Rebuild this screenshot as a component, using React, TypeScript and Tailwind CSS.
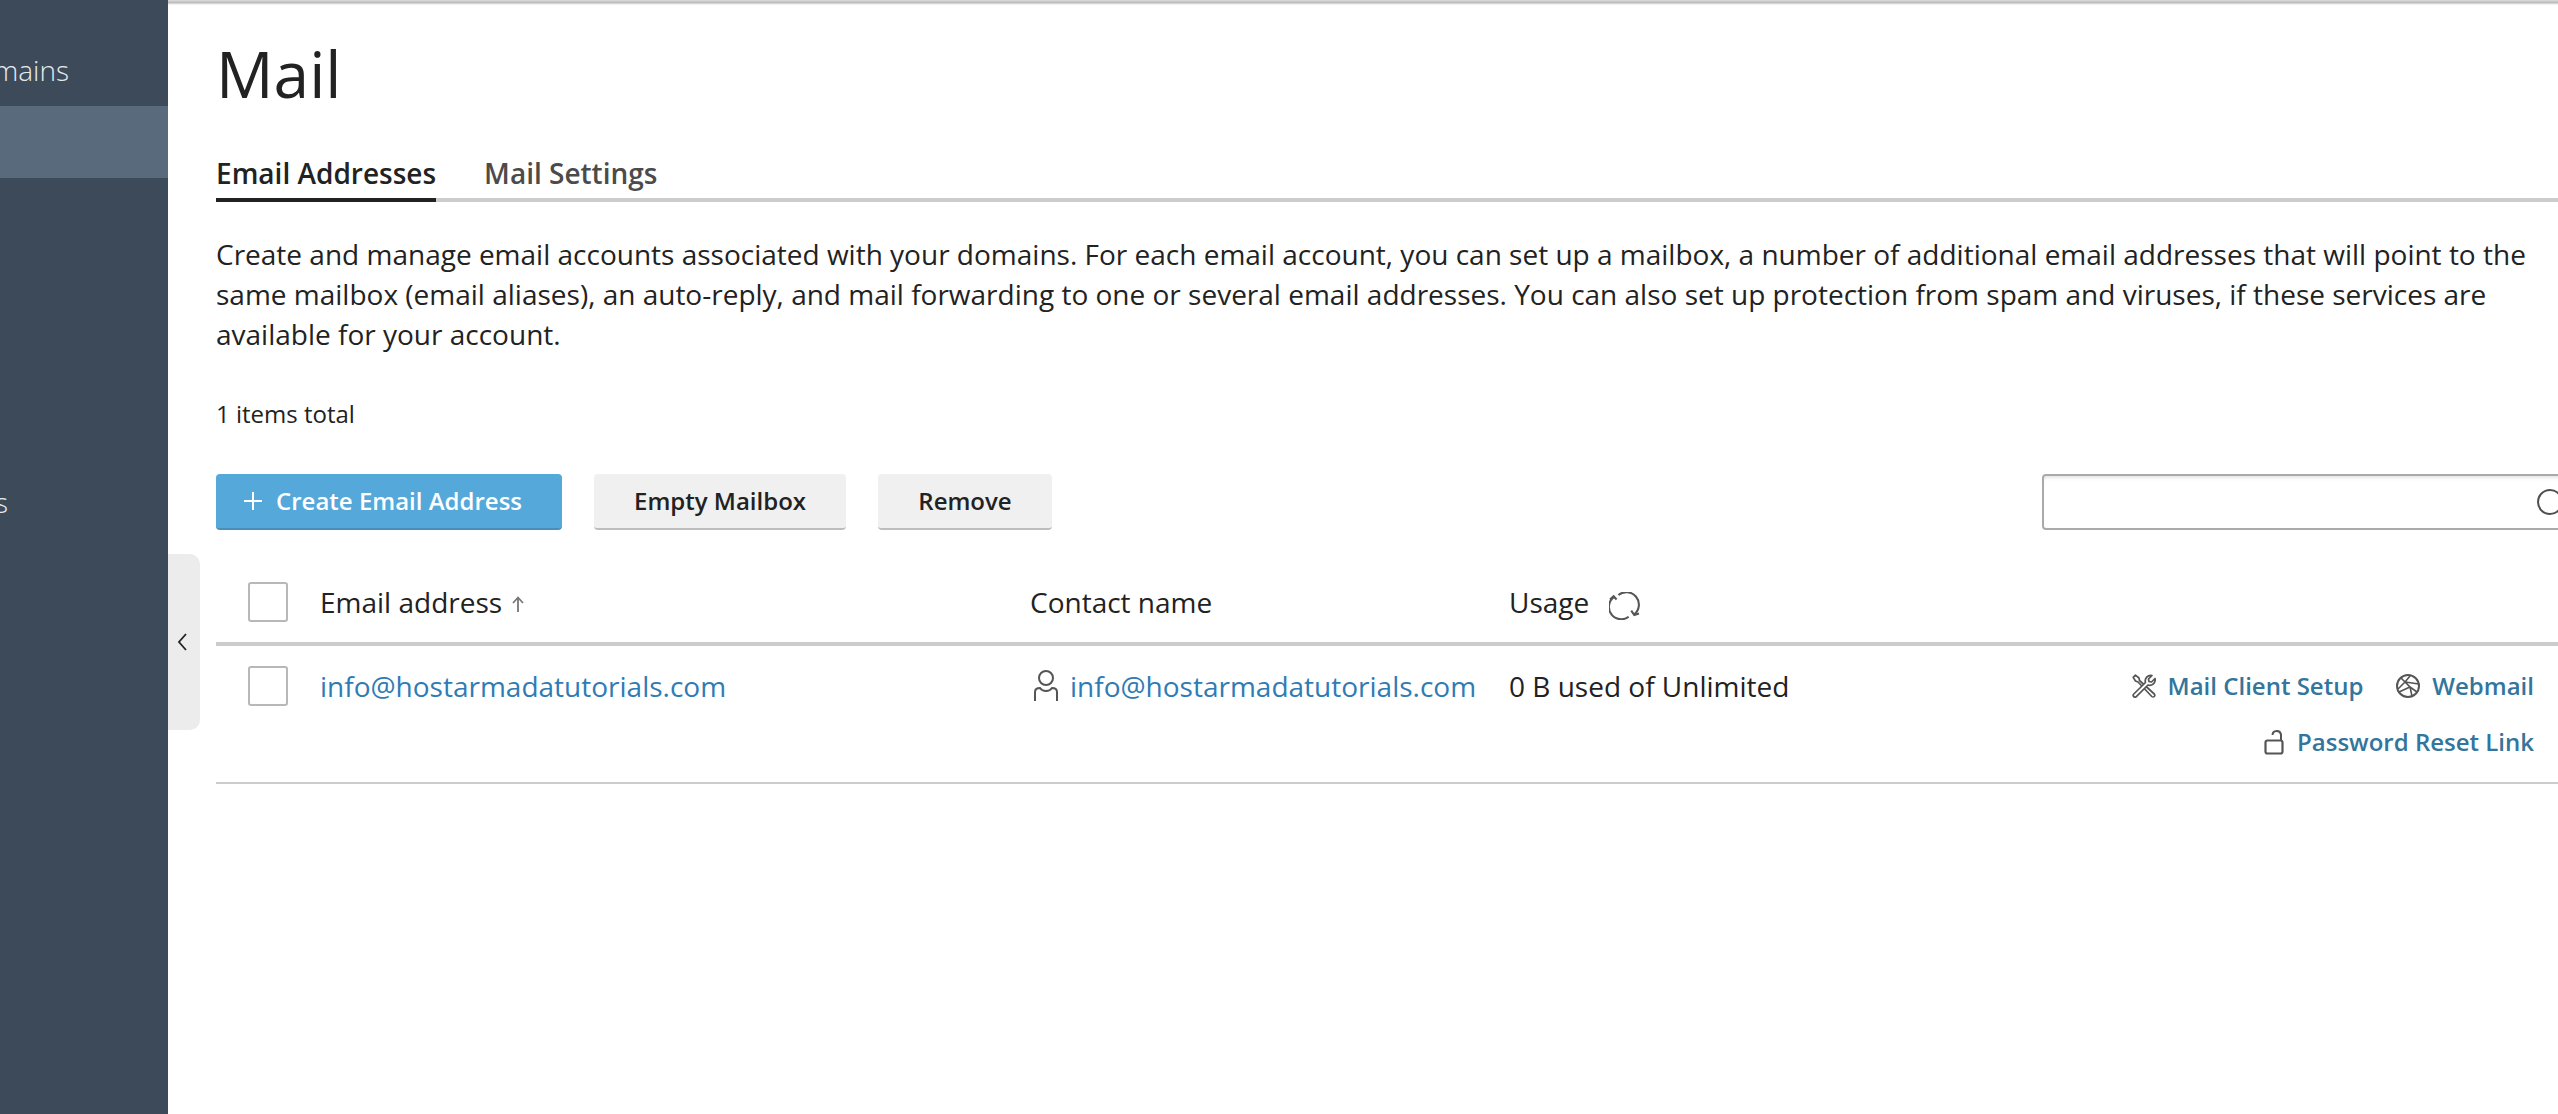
import React from "react";

const Ic = ({ className, children, vb }: { className: string; children: React.ReactNode; vb: string }) => (
  <svg viewBox={vb} fill="none" stroke="#555555" strokeWidth="2" className={className}>{children}</svg>
);

function Tools() {
  return (
    <Ic className="w-[24px] h-[24px] shrink-0" vb="0 0 24 24">
      <path d="M1.2 3.4L3.4 1.2 7 4l.5 2.5L22.3 20a1.7 1.7 0 0 1-2.5 2.5L6 8 3.5 7z" strokeWidth="1.7" strokeLinejoin="round" />
      <path d="M1.8 20L13.5 8.5A5.5 5.5 0 0 1 20 1.5L16.5 5l.5 2.5 2.5.5L23 4.5A5.5 5.5 0 0 1 16 11L4.3 22.6A1.8 1.8 0 0 1 1.8 20z" strokeWidth="1.7" strokeLinejoin="round" fill="white" />
    </Ic>
  );
}

function Globe() {
  return (
    <Ic className="w-[24px] h-[24px] shrink-0" vb="0 0 24 24">
      <circle cx="12" cy="12" r="11" strokeWidth="2" />
      <path d="M5 4l9 9 2 9M2 15l7-7 5-6M9 8l14 2M3 18l11-5 7 5" strokeWidth="1.6" />
    </Ic>
  );
}

function Lock() {
  return (
    <Ic className="w-[20px] h-[26px] shrink-0" vb="0 0 20 26">
      <rect x="1.5" y="11.5" width="17" height="13" rx="2" strokeWidth="2.2" />
      <path d="M8.5 6a4.3 4.3 0 0 1 8.5-.5V11" strokeWidth="2" />
    </Ic>
  );
}

function User() {
  return (
    <Ic className="ml-[4px] mt-[4px] w-[24px] h-[32px] shrink-0" vb="0 0 24 32">
      <circle cx="12" cy="8" r="7" />
      <path d="M1 31V22q0-4 5-4 2 3 6 3t6-3q5 0 5 4v9" />
    </Ic>
  );
}

function Refresh() {
  return (
    <Ic className="mt-[8px] w-[31px] h-[28px] shrink-0" vb="0 0 33 30">
      <path d="M5 5.5A12.5 12.5 0 0 0 21 26.5" strokeWidth="2.2" />
      <path d="M1 8l3.8-3.5L8 8" strokeWidth="2.2" />
      <path d="M10 3.2A12.5 12.5 0 0 1 27 24" strokeWidth="2.2" />
      <path d="M23.7 20l3.3 4.7 5-1.7" strokeWidth="2.2" />
    </Ic>
  );
}

function Check() {
  return <span className="block w-[40px] h-[40px] shrink-0 rounded-[3px] border-2 border-[#b8b8b8] bg-white" />;
}

function SideItem({ label, width, active }: { label?: string; width?: string; active?: boolean }) {
  return (
    <div className={`h-[72px] flex items-center ${active ? "bg-[#586a7c]" : ""}`}>
      {label ? (
        <div className={`flex justify-end whitespace-nowrap text-[28px] font-light text-[#e6eaee] ${width}`}>{label}</div>
      ) : null}
    </div>
  );
}

export default function App() {
  return (
    <div className="flex h-[1114px] w-[2558px] overflow-hidden bg-white text-[#222222] font-['Open_Sans',sans-serif]">
      <aside className="w-[168px] shrink-0 overflow-hidden bg-[#3d4a5a] pt-[34px]">
        <SideItem label="Websites & Domains" width="w-[69px]" />
        <SideItem active />
        <SideItem />
        <SideItem />
        <SideItem />
        <SideItem />
        <SideItem label="Statistics" width="w-[8px]" />
      </aside>
      <main className="relative flex-1 min-w-0 pl-[48px]">
        <div className="absolute left-0 right-0 top-0 h-[5px] bg-gradient-to-b from-[#dcdcdc] via-[#bdbdbd] to-white" />
        <div className="absolute left-0 top-[554px] flex h-[176px] w-[32px] items-center rounded-r-[10px] bg-[#ececec] pl-[8px]">
          <svg viewBox="0 0 12 20" className="h-[20px] w-[12px]" fill="none" stroke="#222" strokeWidth="1.8"><path d="M10 2L3 10l7 8" /></svg>
        </div>

        <h1 className="pt-[32px] text-[64px] leading-[84px] font-normal text-[#222222]">Mail</h1>

        <div className="mt-[32px] flex h-[54px] items-start gap-[48px] border-b-4 border-[#cccccc] pt-[5px] text-[28px] leading-[40px] font-semibold">
          <div className="h-[49px] border-b-4 border-[#222222]">Email Addresses</div>
          <div className="text-[#4b4b4b]">Mail Settings</div>
        </div>

        <p className="mt-[32px] pr-[24px] text-[28px] leading-[40px]">
          Create and manage email accounts associated with your domains. For each email account, you can set up a mailbox, a number of additional email addresses that will point to the same mailbox (email aliases), an auto-reply, and mail forwarding to one or several email addresses. You can also set up protection from spam and viruses, if these services are available for your account.
        </p>

        <div className="mt-[43px] text-[24px] leading-[34px]">1 items total</div>

        <div className="mt-[43px] flex h-[56px]">
          <button className="flex h-[56px] w-[346px] shrink-0 items-center whitespace-nowrap rounded-[4px] border-b-2 border-[#4a8fb9] bg-[#54a8da] pl-[28px] text-[24px] font-semibold text-white">
            <svg viewBox="0 0 18 18" className="mr-[14px] h-[18px] w-[18px]" stroke="white" strokeWidth="2"><path d="M9 0v18M0 9h18" /></svg>
            Create Email Address
          </button>
          <button className="ml-[32px] h-[56px] w-[252px] shrink-0 rounded-[4px] border-b-2 border-[#bdbdbd] bg-[#f0f0f0] text-[24px] font-semibold">Empty Mailbox</button>
          <button className="ml-[32px] h-[56px] w-[174px] shrink-0 rounded-[4px] border-b-2 border-[#bdbdbd] bg-[#f0f0f0] text-[24px] font-semibold">Remove</button>
          <div className="ml-[990px] flex h-[56px] w-[600px] shrink-0 items-center rounded-[4px] border-2 border-[#aaaaaa] pl-[493px] shadow-[inset_0_4px_4px_-3px_rgba(0,0,0,0.15)]">
            <span className="block h-[26px] w-[26px] shrink-0 rounded-full border-2 border-[#4f4f4f]" />
          </div>
        </div>

        <div className="mt-[44px] flex h-[72px] items-start border-b-4 border-[#cccccc] pl-[32px] pt-[8px] text-[28px] leading-[40px]">
          <Check />
          <div className="ml-[32px] w-[710px] flex items-center">
            Email address
            <svg viewBox="0 0 12 16" className="ml-[10px] mt-[4px] h-[16px] w-[12px]" fill="none" stroke="#777777" strokeWidth="1.8"><path d="M6 16V2M1 7l5-5.5L11 7" /></svg>
          </div>
          <div className="w-[479px]">Contact name</div>
          <div className="flex items-center gap-[20px]">Usage <Refresh /></div>
        </div>
        <div className="flex h-[138px] border-b-2 border-[#cccccc] pl-[32px] pt-[20px] text-[28px] leading-[40px]">
          <Check />
          <a className="ml-[32px] w-[710px] text-[#2f7cb4]">info@hostarmadatutorials.com</a>
          <div className="flex w-[479px] gap-[12px]">
            <User />
            <a className="text-[#2f7cb4]">info@hostarmadatutorials.com</a>
          </div>
          <div className="w-[500px]">0 B used of Unlimited</div>
          <div className="ml-auto mr-[24px] flex flex-col items-end gap-[16px] text-[24px] font-semibold leading-[40px] text-[#33759c]">
            <div className="flex items-center">
              <Tools /><span className="ml-[12px]">Mail Client Setup</span>
              <span className="ml-[33px] flex items-center"><Globe /><span className="ml-[12px]">Webmail</span></span>
            </div>
            <div className="flex items-center"><Lock /><span className="ml-[13px]">Password Reset Link</span></div>
          </div>
        </div>
      </main>
    </div>
  );
}
